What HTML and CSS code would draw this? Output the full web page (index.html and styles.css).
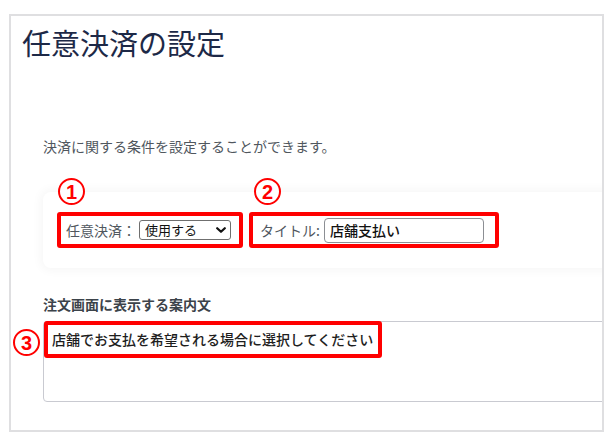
FILE: index.html
```html
<!DOCTYPE html>
<html lang="ja">
<head>
    <meta charset="UTF-8">
    <meta name="viewport" content="width=device-width, initial-scale=1.0">
    <title>任意決済の設定</title>
    <link rel="stylesheet" href="styles.css">
</head>
<body>
    <div class="settings-frame">
        <h1 class="page-title">任意決済の設定</h1>
        <p class="lead">決済に関する条件を設定することができます。</p>

        <div class="option-card">
            <span class="step step-1">1</span>
            <span class="step step-2">2</span>
            <label class="mark mark-use">
                <span class="field-name">任意決済：</span>
                <span class="select-wrap">
                    <select class="use-select">
                        <option>使用する</option>
                        <option>使用しない</option>
                    </select>
                    <svg class="chevron" viewBox="0 0 10 6" fill="none" stroke="#111" stroke-width="2.2" stroke-linecap="round" stroke-linejoin="round">
                        <path d="M1.2 1.2 5 4.8 8.8 1.2"/>
                    </svg>
                </span>
            </label>
            <label class="mark mark-title">
                <span class="field-name">タイトル:</span>
                <input class="title-input" type="text" value="店舗支払い">
            </label>
        </div>

        <h2 class="field-label">注文画面に表示する案内文</h2>
        <div class="guide">
            <span class="step step-3">3</span>
            <div class="guide-box">
                <span class="mark mark-guide">店舗でお支払を希望される場合に選択してください</span>
            </div>
        </div>
    </div>
</body>
</html>
```

FILE: styles.css
```css
body {
    margin: 0;
    background: #fff;
    font-family: "Noto Sans CJK JP", "Noto Sans", sans-serif;
    color: #50575e;
}

.settings-frame {
    position: relative;
    margin: 14px 0 0 9px;
    width: 559px;
    height: 406px;
    border: 2px solid #dfdfe1;
    padding: 8px 0 0 32px;
    overflow: hidden;
    box-sizing: content-box;
}

.page-title {
    margin: 0 0 0 -21px;
    font-size: 29px;
    line-height: 36px;
    font-weight: 400;
    color: #1d2947;
}

.lead {
    margin: 76px 0 0;
    font-size: 14px;
    line-height: 20px;
}

.option-card {
    position: relative;
    display: flex;
    gap: 6px;
    margin: 36px -30px 0 0;
    padding: 20px 14px;
    background: #fff;
    border-radius: 8px;
    box-shadow: 0 0 10px 3px rgba(0, 0, 0, 0.035);
}

.mark {
    border: 4px solid #ff0000;
    border-radius: 3px;
    box-sizing: border-box;
}

.mark-use,
.mark-title {
    display: flex;
    align-items: center;
    height: 36px;
    font-size: 14px;
    line-height: 20px;
}

.mark-use {
    width: 186px;
    padding-left: 5px;
}

.mark-title {
    width: 250px;
    padding-left: 7px;
}

.field-name {
    white-space: nowrap;
}

.select-wrap {
    position: relative;
    margin-left: 3px;
    display: flex;
}

.use-select {
    appearance: none;
    width: 92px;
    height: 20px;
    margin: 0;
    padding: 0 0 0 5px;
    border: 1px solid #6f6f6f;
    border-radius: 3px;
    background: #fff;
    font-family: inherit;
    font-size: 13px;
    line-height: 18px;
    color: #111;
}

.chevron {
    position: absolute;
    right: 5px;
    top: 7px;
    width: 10px;
    height: 6px;
    pointer-events: none;
}

.title-input {
    width: 160px;
    height: 25px;
    margin-left: 4px;
    padding: 0 5px;
    border: 1px solid #8c8f94;
    border-radius: 4px;
    box-sizing: border-box;
    font-family: inherit;
    font-size: 14px;
    font-weight: 500;
    color: #111;
}

.field-label {
    margin: 26px 0 0;
    font-size: 14px;
    line-height: 20px;
    font-weight: 700;
    color: #3c434a;
}

.guide {
    position: relative;
    margin-top: 7px;
}

.guide-box {
    height: 81px;
    margin-right: -30px;
    border: 1px solid #c9cad1;
    border-radius: 4px;
    box-sizing: border-box;
}

.mark-guide {
    display: inline-block;
    margin-top: -1px;
    padding: 4px 5px 5px 4px;
    font-size: 14px;
    line-height: 20px;
    font-weight: 500;
    color: #1e1e1e;
}

.step {
    position: absolute;
    display: flex;
    align-items: center;
    justify-content: center;
    width: 27px;
    height: 27px;
    border: 2.5px solid #ff0000;
    border-radius: 50%;
    box-sizing: border-box;
    background: #fff;
    font-family: "Liberation Sans", Arial, sans-serif;
    font-size: 20px;
    font-weight: 700;
    line-height: 1;
    color: #ff0000;
}

.step-1 {
    left: 15px;
    top: -14px;
}

.step-2 {
    left: 211px;
    top: -14px;
}

.step-3 {
    left: -30px;
    top: 8px;
}
```
